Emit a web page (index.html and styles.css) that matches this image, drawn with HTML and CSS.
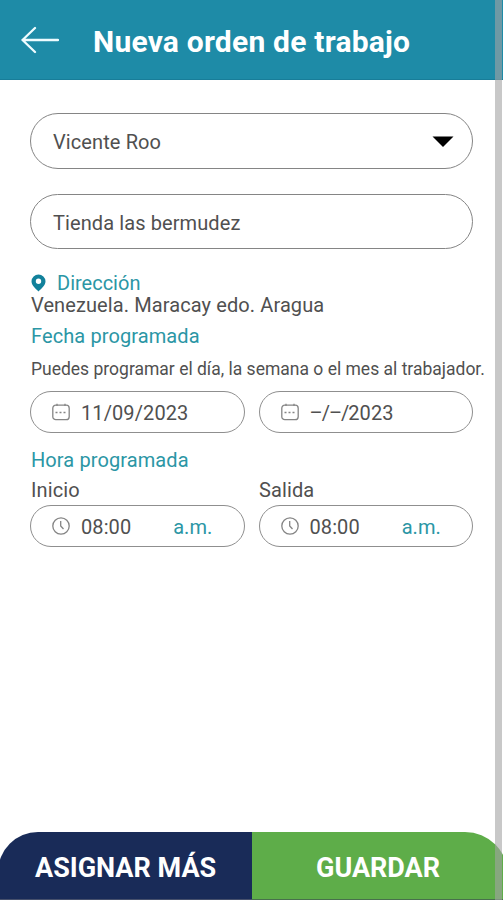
FILE: index.html
```html
<!DOCTYPE html>
<html lang="es">
<head>
<meta charset="utf-8">
<title>Nueva orden de trabajo</title>
<link rel="stylesheet" href="styles.css">
</head>
<body>
<div class="screen">
  <header class="topbar">
    <svg class="back" width="38" height="28" viewBox="0 0 38 28"><path d="M14 2L1.500 14L14 26M1.500 14H37"/></svg>
    <h1 class="title">Nueva orden de trabajo</h1>
  </header>
  <main class="form">
    <div class="field select"><span>Vicente Roo</span>
      <svg width="22" height="12" viewBox="0 0 22 12"><path d="M0.500 0.500H21.500L11 11Z"/></svg>
    </div>
    <div class="field store"><span>Tienda las bermudez</span></div>
    <div class="line address-title">
      <svg width="15" height="18" viewBox="0 0 15 18"><path fill-rule="evenodd" d="M7.500 .5A7 7 0 0 0 .5 7.300C.5 11.500 4.500 14.500 7.500 17.500C10.500 14.500 14.500 11.500 14.500 7.300A7 7 0 0 0 7.500 .5ZM7.500 4.500A2.700 2.700 0 1 1 7.500 9.900A2.700 2.700 0 1 1 7.500 4.500Z"/></svg>
      <span>Dirección</span>
    </div>
    <div class="line address">Venezuela. Maracay edo. Aragua</div>
    <div class="line teal date-title">Fecha programada</div>
    <div class="line hint">Puedes programar el día, la semana o el mes al trabajador.</div>
    <div class="pair">
      <div class="pill">
        <svg class="icon" width="18" height="18" viewBox="0 0 18 18"><rect x=".8" y="2.200" width="16.400" height="14.500" rx="3"/><path d="M5 .8V3M13 .8V3"/><path class="dots" d="M3.500 9.500H14.500"/></svg>
        <span>11/09/2023</span>
      </div>
      <div class="pill">
        <svg class="icon" width="18" height="18" viewBox="0 0 18 18"><rect x=".8" y="2.200" width="16.400" height="14.500" rx="3"/><path d="M5 .8V3M13 .8V3"/><path class="dots" d="M3.500 9.500H14.500"/></svg>
        <span><span class="blank">–/–/</span>2023</span>
      </div>
    </div>
    <div class="line teal hour-title">Hora programada</div>
    <div class="pair labels"><span>Inicio</span><span>Salida</span></div>
    <div class="pair times">
      <div class="pill">
        <svg class="icon" width="18" height="18" viewBox="0 0 18 18"><circle cx="9" cy="9" r="8.200"/><path d="M8.700 4V9L11.500 12"/></svg>
        <span>08:00</span><span class="ampm">a.m.</span>
      </div>
      <div class="pill">
        <svg class="icon" width="18" height="18" viewBox="0 0 18 18"><circle cx="9" cy="9" r="8.200"/><path d="M8.700 4V9L11.500 12"/></svg>
        <span>08:00</span><span class="ampm">a.m.</span>
      </div>
    </div>
  </main>
  <footer class="actions">
    <div class="action assign">ASIGNAR MÁS</div>
    <div class="action save">GUARDAR</div>
  </footer>
  <div class="scrollbar"></div>
</div>
</body>
</html>
```
FILE: styles.css
```css
* { box-sizing: border-box; }
body { margin: 0; background: #fff; font-family: Roboto, "Liberation Sans", sans-serif; color: #505050; }
.screen { position: relative; width: 503px; height: 900px; display: flex; flex-direction: column; overflow: hidden; }
.topbar { height: 80px; flex: none; display: flex; align-items: center; padding-left: 21px; background: #1e8ba7; border-bottom: 1px solid #187d99; }
.back { fill: none; stroke: #effcff; stroke-width: 2.3; stroke-linecap: round; stroke-linejoin: round; }
.title { margin: 4px 0 0 34px; font-size: 30px; letter-spacing: .22px; line-height: 34px; font-weight: 700; color: #fff; white-space: nowrap; }
.form { flex: 1; padding: 33px 30px 0; font-size: 20px; letter-spacing: .1px; }
.field { height: 56px; display: flex; align-items: center; justify-content: space-between; padding: 2px 18px 0 22px; border: 1px solid #858585; border-radius: 28px; }
.store { margin-top: 25px; height: 55px; }
.line { height: 22px; line-height: 22px; padding-left: 1px; white-space: nowrap; }
.teal, .address-title, .ampm { color: #2b96a5; }
.address-title { display: flex; align-items: center; gap: 11px; margin-top: 23px; letter-spacing: 0; }
.address-title svg { fill: #12819b; }
.date-title { margin-top: 9px; }
.hint { margin-top: 11px; margin-bottom: 11px; font-size: 17.5px; letter-spacing: 0; }
.pair { display: grid; grid-template-columns: 1fr 1fr; gap: 14px; }
.pill { height: 42px; display: flex; align-items: center; padding: 2px 0 0 21px; border: 1px solid #8f8f8f; border-radius: 21px; font-size: 20px; }
.icon { flex: none; margin: -2px 11px 0 0; fill: none; stroke: #858585; stroke-width: 1.3; }
.dots { stroke-dasharray: 2 2; }
.blank { letter-spacing: -1px; }
.hour-title { margin-top: 16px; }
.labels { margin-top: 8px; height: 22px; line-height: 22px; padding-left: 1px; }
.times { margin-top: 4px; }
.ampm { margin-left: auto; margin-right: 31px; }
.actions { height: 68px; flex: none; display: flex; margin: 0 -5px 0 -2px; }
.action { display: flex; align-items: center; color: #fff; font-size: 27px; font-weight: 700; padding-top: 4px; white-space: nowrap; }
.assign { width: 254px; padding-left: 37px; background: #192b58; border-top-left-radius: 40px; border-bottom: 1px solid #46506c; }
.save { flex: 1; padding-left: 64px; background: #5ead49; border-top-right-radius: 43px; border-bottom: 1px solid #48704c; }
.scrollbar { position: absolute; top: 0; right: 1px; width: 7px; height: 900px; background: rgba(163, 163, 163, .6); }
```
